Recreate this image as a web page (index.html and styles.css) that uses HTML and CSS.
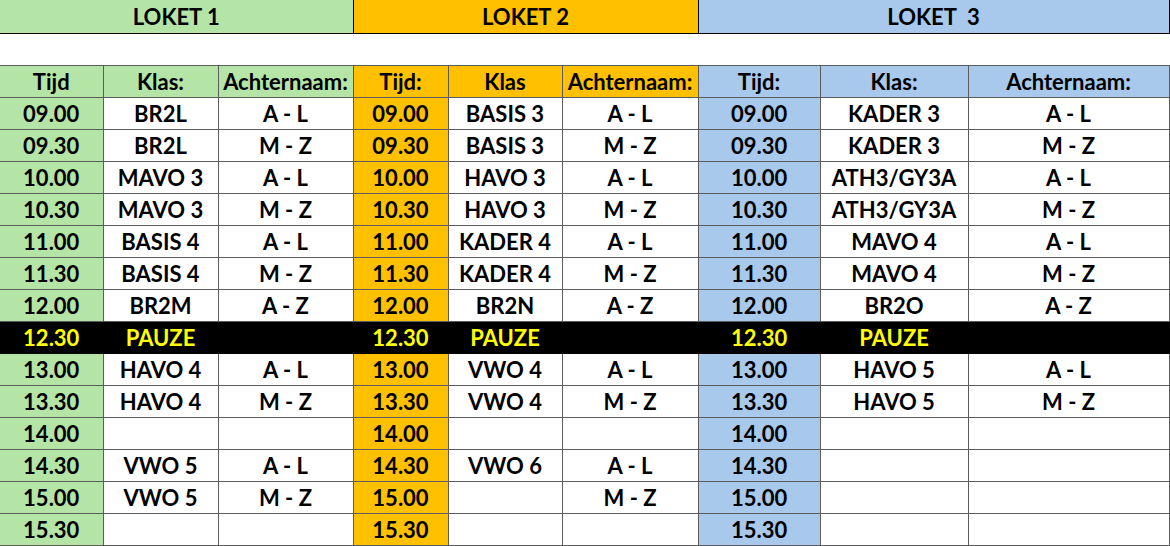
FILE: index.html
```html
<!DOCTYPE html>
<html lang="nl">
<head>
  <meta charset="UTF-8" />
  <title>Loketten rooster</title>
  <link rel="stylesheet" href="styles.css">
</head>
<body>
  <table class="rooster">
    <colgroup>
      <col class="c-tijd1"><col class="c-klas1"><col class="c-naam1">
      <col class="c-tijd2"><col class="c-klas2"><col class="c-naam2">
      <col class="c-tijd3"><col class="c-klas3"><col class="c-naam3">
    </colgroup>
    <tr class="loket-row">
      <th colspan="3" class="green">LOKET 1</th>
      <th colspan="3" class="orange">LOKET 2</th>
      <th colspan="3" class="blue">LOKET&nbsp; 3</th>
    </tr>
    <tr class="blank-row"><td colspan="9"></td></tr>
    <tr class="head-row">
      <th class="green">Tijd</th><th class="green">Klas:</th><th class="green">Achternaam:</th>
      <th class="orange">Tijd:</th><th class="orange">Klas</th><th class="orange">Achternaam:</th>
      <th class="blue">Tijd:</th><th class="blue">Klas:</th><th class="blue">Achternaam:</th>
    </tr>
    <tr>
      <td class="green">09.00</td><td>BR2L</td><td>A - L</td>
      <td class="orange">09.00</td><td>BASIS 3</td><td>A - L</td>
      <td class="blue">09.00</td><td>KADER 3</td><td>A - L</td>
    </tr>
    <tr>
      <td class="green">09.30</td><td>BR2L</td><td>M - Z</td>
      <td class="orange">09.30</td><td>BASIS 3</td><td>M - Z</td>
      <td class="blue">09.30</td><td>KADER 3</td><td>M - Z</td>
    </tr>
    <tr>
      <td class="green">10.00</td><td>MAVO 3</td><td>A - L</td>
      <td class="orange">10.00</td><td>HAVO 3</td><td>A - L</td>
      <td class="blue">10.00</td><td>ATH3/GY3A</td><td>A - L</td>
    </tr>
    <tr>
      <td class="green">10.30</td><td>MAVO 3</td><td>M - Z</td>
      <td class="orange">10.30</td><td>HAVO 3</td><td>M - Z</td>
      <td class="blue">10.30</td><td>ATH3/GY3A</td><td>M - Z</td>
    </tr>
    <tr>
      <td class="green">11.00</td><td>BASIS 4</td><td>A - L</td>
      <td class="orange">11.00</td><td>KADER 4</td><td>A - L</td>
      <td class="blue">11.00</td><td>MAVO 4</td><td>A - L</td>
    </tr>
    <tr>
      <td class="green">11.30</td><td>BASIS 4</td><td>M - Z</td>
      <td class="orange">11.30</td><td>KADER 4</td><td>M - Z</td>
      <td class="blue">11.30</td><td>MAVO 4</td><td>M - Z</td>
    </tr>
    <tr>
      <td class="green">12.00</td><td>BR2M</td><td>A - Z</td>
      <td class="orange">12.00</td><td>BR2N</td><td>A - Z</td>
      <td class="blue">12.00</td><td>BR2O</td><td>A - Z</td>
    </tr>
    <tr class="pauze">
      <td>12.30</td><td>PAUZE</td><td></td>
      <td>12.30</td><td>PAUZE</td><td></td>
      <td>12.30</td><td>PAUZE</td><td></td>
    </tr>
    <tr>
      <td class="green">13.00</td><td>HAVO 4</td><td>A - L</td>
      <td class="orange">13.00</td><td>VWO 4</td><td>A - L</td>
      <td class="blue">13.00</td><td>HAVO 5</td><td>A - L</td>
    </tr>
    <tr>
      <td class="green">13.30</td><td>HAVO 4</td><td>M - Z</td>
      <td class="orange">13.30</td><td>VWO 4</td><td>M - Z</td>
      <td class="blue">13.30</td><td>HAVO 5</td><td>M - Z</td>
    </tr>
    <tr>
      <td class="green">14.00</td><td></td><td></td>
      <td class="orange">14.00</td><td></td><td></td>
      <td class="blue">14.00</td><td></td><td></td>
    </tr>
    <tr>
      <td class="green">14.30</td><td>VWO 5</td><td>A - L</td>
      <td class="orange">14.30</td><td>VWO 6</td><td>A - L</td>
      <td class="blue">14.30</td><td></td><td></td>
    </tr>
    <tr>
      <td class="green">15.00</td><td>VWO 5</td><td>M - Z</td>
      <td class="orange">15.00</td><td></td><td>M - Z</td>
      <td class="blue">15.00</td><td></td><td></td>
    </tr>
    <tr>
      <td class="green">15.30</td><td></td><td></td>
      <td class="orange">15.30</td><td></td><td></td>
      <td class="blue">15.30</td><td></td><td></td>
    </tr>
  </table>
</body>
</html>
```

FILE: styles.css
```css
* {
  box-sizing: border-box;
}

body {
  margin: 0;
  background: white;
  font-family: Lato, "Liberation Sans", sans-serif;
}

.rooster {
  border-collapse: collapse;
  table-layout: fixed;
  width: 1169px;
  font-size: 22px;
  font-weight: bold;
  color: black;
}

.c-tijd1 { width: 103px; }
.c-klas1 { width: 115px; }
.c-naam1 { width: 135px; }
.c-tijd2 { width: 95px; }
.c-klas2 { width: 114px; }
.c-naam2 { width: 136px; }
.c-tijd3 { width: 122px; }
.c-klas3 { width: 148px; }
.c-naam3 { width: 201px; }

.rooster th,
.rooster td {
  height: 32px;
  padding: 2px 0 0;
  text-align: center;
  vertical-align: middle;
  white-space: nowrap;
  line-height: 1;
  border: 1px solid #5c5c5c;
  font-weight: bold;
}

.rooster tr > :first-child {
  border-left: none;
}

.loket-row th {
  height: 33px;
  border: 1px solid black;
  border-top: none;
}

.loket-row th:first-child {
  border-left: none;
}

.blank-row td {
  height: 32px;
  border-left: none;
  border-right: none;
  background: white;
}

.head-row th {
  border-top-color: #a0a0a0;
}

.green { background: #b4e5a6; }
.orange { background: #ffc000; }
.blue { background: #a9c9ec; }

.pauze td {
  background: black;
  color: #ffff00;
  border-color: black;
}
```
